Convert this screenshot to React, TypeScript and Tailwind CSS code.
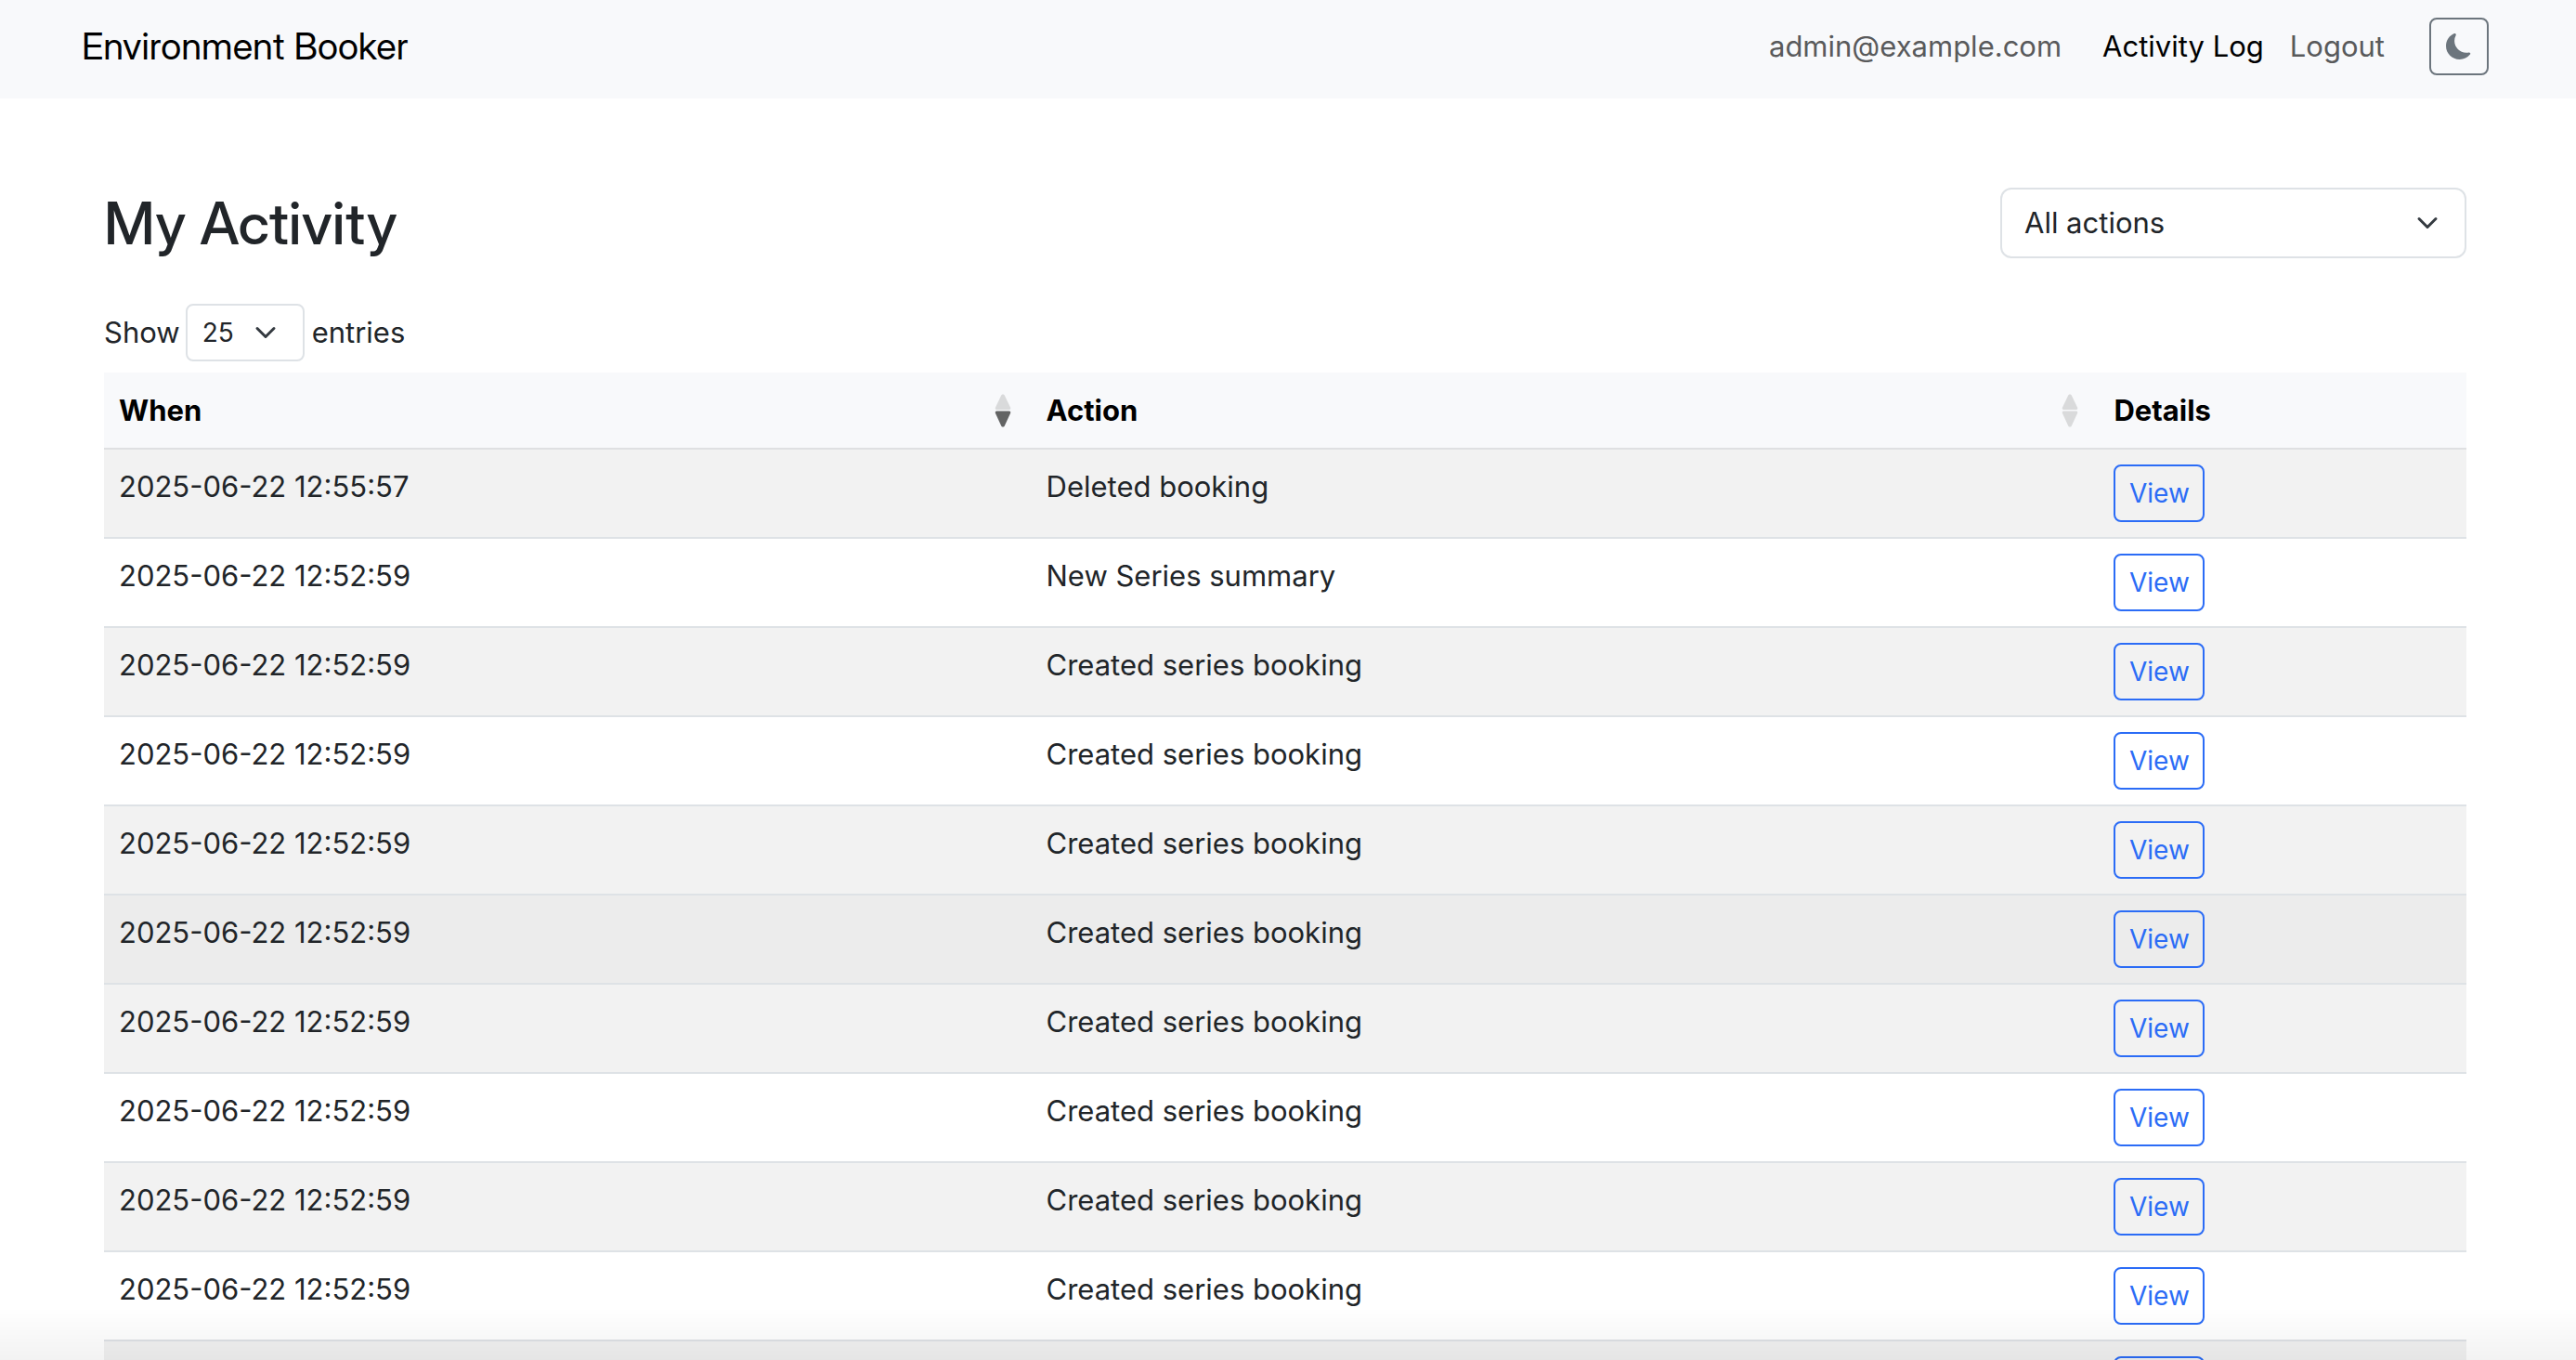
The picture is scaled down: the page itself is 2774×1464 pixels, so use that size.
const rows = [
  ["2025-06-22 12:55:57", "Deleted booking"],
  ["2025-06-22 12:52:59", "New Series summary"],
  ...Array.from({ length: 9 }, () => ["2025-06-22 12:52:59", "Created series booking"]),
];

function Chevron({ className }: { className: string }) {
  return (
    <svg viewBox="0 0 16 16" className={className} fill="none" stroke="#343a40" strokeWidth="2" strokeLinecap="round" strokeLinejoin="round" aria-hidden="true">
      <path d="m2 5 6 6 6-6" />
    </svg>
  );
}

function SortIcon({ down = "#d9dadb" }: { down?: string }) {
  return (
    <svg viewBox="0 0 18 36" className="mr-1.5 h-9 w-[18px] shrink-0" aria-hidden="true">
      <path d="M9 .5c1 0 1.500.5 2 1.500L17 14.500c.6 1.500.2 2.500-1.300 2.500H2.300C.8 17 .4 16 1 14.500L7 2C7.500 1 8 .5 9 .5Z" fill="#d9dadb" />
      <path d="M9 35.500c1 0 1.500-.5 2-1.500L17 21c.6-1.500.2-2.500-1.300-2.500H2.300C.8 18.500.4 19.500 1 21L7 34C7.500 35 8 35.500 9 35.500Z" fill={down} />
    </svg>
  );
}

export default function App() {
  return (
    <div className="h-screen overflow-hidden bg-white font-['Inter',sans-serif] text-[31px] leading-[48px] text-[#212529]">
      <header className="flex items-center justify-between bg-[#f8f9fb] pt-[18px] pr-[94px] pb-6 pl-[88px]">
        <a href="#" className="font-['Inter_Display','Inter',sans-serif] text-[40px] leading-[64px] text-black">Environment Booker</a>
        <nav className="flex items-center">
          <span className="mr-11 text-[#595a5b]">admin@example.com</span>
          <a href="#activity" className="mr-7 text-black">Activity Log</a>
          <a href="#logout" className="mr-12 text-[#595a5b]">Logout</a>
          <button type="button" aria-label="Toggle dark mode" className="flex h-[62px] w-16 items-center justify-center rounded-lg border-2 border-[#6c757d] text-[#6c757d]">
            <svg viewBox="0 0 16 16" className="size-7" fill="currentColor" aria-hidden="true">
              <path d="M6 .278a.77.77 0 0 1 .08.858 7.200 7.200 0 0 0-.878 3.460c0 4.021 3.278 7.277 7.318 7.277q.792-.001 1.533-.16a.79.79 0 0 1 .81.316.73.73 0 0 1-.031.893A8.350 8.350 0 0 1 8.344 16C3.734 16 0 12.286 0 7.710 0 4.266 2.114 1.312 5.124.060A.75.75 0 0 1 6 .278" />
            </svg>
          </button>
        </nav>
      </header>
      <main className="px-[112px] pt-24 pr-[118px]">
        <div className="flex items-center justify-between">
          <h1 className="font-['Inter_Display','Inter',sans-serif] text-[63px] leading-[76px] font-medium">My Activity</h1>
          <div className="relative w-[502px]">
            <select aria-label="Filter actions" className="block h-[76px] w-full appearance-none rounded-xl border-2 border-[#dee2e6] bg-white px-6">
              <option>All actions</option>
            </select>
            <Chevron className="pointer-events-none absolute top-[26px] right-[30px] size-6" />
          </div>
        </div>
        <div className="mt-[49px] mb-3 flex items-center">
          <label htmlFor="length">Show</label>
          <div className="relative mr-2 ml-1.5 w-32">
            <select id="length" className="block h-[62px] w-full appearance-none rounded-lg border-2 border-[#dee2e6] bg-white px-4 text-[28px]">
              <option>25</option>
            </select>
            <Chevron className="pointer-events-none absolute top-[19px] right-[30px] size-6" />
          </div>
          <span>entries</span>
        </div>
        <table className="w-full table-fixed border-collapse text-left">
          <colgroup>
            <col className="w-[39.25%]" />
            <col className="w-[45.2%]" />
            <col />
          </colgroup>
          <thead>
            <tr className="h-[82px] border-b-2 border-[#dfe0e2] bg-[#f8f9fb] text-black">
              <th aria-sort="descending" className="p-4 font-bold"><div className="flex items-center justify-between">When<SortIcon down="#636464" /></div></th>
              <th className="p-4 font-bold"><div className="flex items-center justify-between">Action<SortIcon /></div></th>
              <th className="p-4 font-bold">Details</th>
            </tr>
          </thead>
          <tbody>
            {rows.map(([when, action], i) => (
              <tr key={i} className={i === 5 ? "h-24 border-b-2 border-[#dee2e6] bg-[#ececec] align-top" : "h-24 border-b-2 border-[#dee2e6] align-top odd:bg-[#f2f2f2]"}>
                <td className="p-4">{when}</td>
                <td className="p-4">{action}</td>
                <td className="p-4">
                  <button type="button" className="block h-[62px] w-[98px] rounded-lg border-2 border-[#2b6cf6] text-center text-[28px] leading-[42px] text-[#2b6cf6]">View</button>
                </td>
              </tr>
            ))}
          </tbody>
        </table>
      </main>
      <div className="pointer-events-none fixed inset-x-0 bottom-0 h-14 bg-linear-to-b from-transparent to-black/5" />
    </div>
  );
}
